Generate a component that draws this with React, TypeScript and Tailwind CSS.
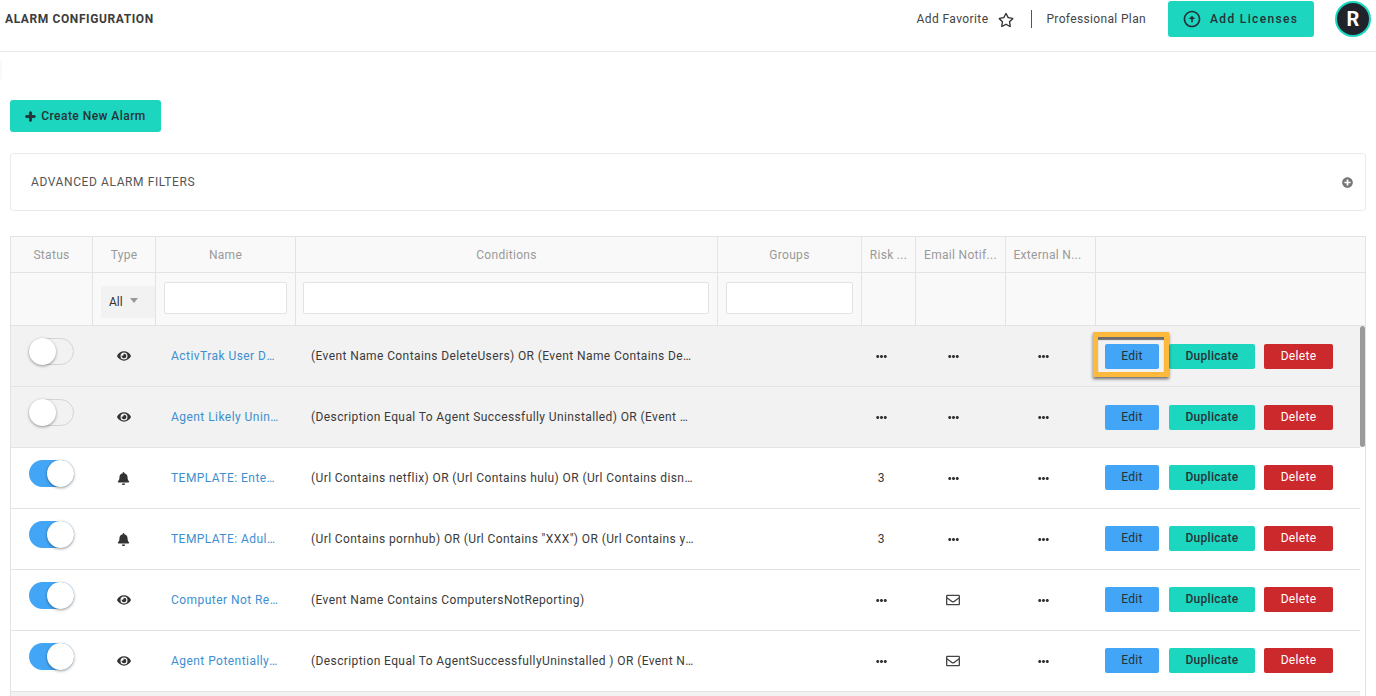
import { FaBell, FaEllipsisH, FaEye, FaPlus, FaPlusCircle, FaRegEnvelope, FaRegStar } from "react-icons/fa"
import { MdOutlineArrowCircleUp } from "react-icons/md"

const cols = "grid grid-cols-[82px_63px_140px_422px_144px_54px_90px_90px_264px]"

const headers = ["Status", "Type", "Name", "Conditions", "Groups", "Risk ...", "Email Notif...", "External N...", ""]

type Alarm = {
  on: boolean
  kind: "eye" | "bell"
  name: string
  conditions: string
  risk?: string
  email?: boolean
}

const alarms: Alarm[] = [
  { on: false, kind: "eye", name: "ActivTrak User Delete Alarm", conditions: "(Event Name Contains DeleteUsers) OR (Event Name Contains DeleteUserAccounts) OR (Event Name Contains Other)" },
  { on: false, kind: "eye", name: "Agent Likely Uninstalled", conditions: "(Description Equal To Agent Successfully Uninstalled) OR (Event Name Contains AgentUninstalled) OR (Other)" },
  { on: true, kind: "bell", name: "TEMPLATE: Entertainment", conditions: "(Url Contains netflix) OR (Url Contains hulu) OR (Url Contains disneyplus) OR (Url Contains youtube)", risk: "3" },
  { on: true, kind: "bell", name: "TEMPLATE: Adult Content", conditions: "(Url Contains pornhub) OR (Url Contains \"XXX\") OR (Url Contains youporn) OR (Url Contains other sites)", risk: "3" },
  { on: true, kind: "eye", name: "Computer Not Reporting", conditions: "(Event Name Contains ComputersNotReporting)", email: true },
  { on: true, kind: "eye", name: "Agent Potentially Uninstalled", conditions: "(Description Equal To AgentSuccessfullyUninstalled ) OR (Event Name Contains AgentUninstalled) OR (Other)", email: true },
]

function Toggle({ on }: { on: boolean }) {
  return (
    <div
      className={
        on
          ? "flex h-[27px] w-[45px] justify-end rounded-full bg-[#42a5f5]"
          : "flex h-[27px] w-[45px] justify-start rounded-full border border-[#d4d4d4] bg-[#f2f2f2]"
      }
    >
      <div className={`h-[27px] w-[27px] shrink-0 rounded-full bg-white shadow-[0_1px_3px_rgba(0,0,0,0.4)] ${on ? "" : "-ml-px -mt-px"}`} />
    </div>
  )
}

function Dots() {
  return <FaEllipsisH className="text-[11px] text-[#333]" />
}

function AlarmRow({ alarm, index }: { alarm: Alarm; index: number }) {
  return (
    <div className={`${cols} h-[61px] w-[1349px] items-center border-b border-[#e3e3e3] text-xs text-[#3a3a3a] ${alarm.on ? "bg-white" : "bg-[#f2f2f2]"}`}>
      <div className="flex h-full justify-start pl-[18px] pt-3">
        <Toggle on={alarm.on} />
      </div>
      <div className="flex justify-center pr-[2px]">
        {alarm.kind === "eye" ? <FaEye className="text-[14px] text-[#333]" /> : <FaBell className="text-[13px] text-[#333]" />}
      </div>
      <div className="truncate pl-[15px] pr-[17px] tracking-[0.45px] text-[#3d8fcf]">{alarm.name}</div>
      <div className="truncate pl-[15px] pr-[24px] tracking-[0.4px]">{alarm.conditions}</div>
      <div />
      <div className="flex justify-center pr-4">{alarm.risk ?? <Dots />}</div>
      <div className="flex justify-center pr-4">
        {alarm.email ? <FaRegEnvelope className="text-[14px] text-[#444]" /> : <Dots />}
      </div>
      <div className="flex justify-center pr-4"><Dots /></div>
      <div className={`relative flex items-center pl-[9px] tracking-[0.3px] ${index >= 2 ? "-mt-[2px]" : ""}`}>
        <button className="h-[25px] w-[54px] rounded-[2px] bg-[#42a5f5] text-[#263238]">Edit</button>
        <button className="ml-[10px] h-[25px] w-[86px] rounded-[2px] bg-[#1cd6c0] font-medium text-[#263238]">Duplicate</button>
        <button className="ml-[9px] h-[25px] w-[69px] rounded-[2px] bg-[#cc292c] text-white">Delete</button>
        {index === 0 && (
          <div className="absolute left-[-3px] top-[-12px] h-[45px] w-[76px] border-[5px] border-[#fdb93b] shadow-[0_2px_3px_rgba(0,0,0,0.55),inset_0_3px_1px_rgba(0,0,0,0.55)]" />
        )}
      </div>
    </div>
  )
}

export default function App() {
  return (
    <div className="relative h-[696px] w-[1376px] overflow-hidden bg-white font-['Roboto',sans-serif] text-[#333]">
      <div className="absolute left-0 top-[60px] h-5 w-[2px] rounded-r-full bg-[#f9f9f9]" />
      <header className="flex h-[52px] items-start border-b border-[#e8e8e8] pt-px">
        <h1 className="ml-[5px] mt-[10px] text-xs font-bold tracking-[0.6px] text-[#3c3c3c]">ALARM CONFIGURATION</h1>
        <div className="ml-auto mt-[9px] flex items-center text-xs tracking-[0.4px] text-[#444]">
          Add Favorite
          <FaRegStar className="ml-[10px] mt-[2px] text-[16px] text-[#333]" />
        </div>
        <div className="ml-[17px] mt-[9px] h-[18px] w-px bg-[#555]" />
        <div className="ml-[14px] mt-[10px] text-xs tracking-[0.35px] text-[#444]">Professional Plan</div>
        <button className="ml-[22px] flex h-[36px] w-[146px] items-center justify-start gap-2 rounded-[3px] bg-[#1cd6c0] pl-[14px] text-xs font-medium tracking-[1.35px] text-[#263238]">
          <MdOutlineArrowCircleUp className="text-[20px]" />
          Add Licenses
        </button>
        <div className="ml-[21px] mr-[5px] flex h-9 w-9 items-center justify-center rounded-full border-2 border-[#1cd6c0] bg-[#20232b] text-[20px] font-bold text-white">
          R
        </div>
      </header>

      <div className="px-[10px] pt-12">
        <button className="flex h-8 w-[151px] items-center justify-center gap-[5px] rounded-[3px] bg-[#1cd6c0] text-xs font-medium tracking-[0.45px] text-[#263238]">
          <FaPlus className="text-[11px]" stroke="currentColor" strokeWidth={40} />
          Create New Alarm
        </button>

        <div className="mt-[21px] flex h-[58px] w-[1356px] items-center justify-between rounded-[3px] border border-[#ebebeb] pl-5 pr-3 text-xs tracking-[0.6px] text-[#555]">
          ADVANCED ALARM FILTERS
          <FaPlusCircle className="text-[11px] text-[#777]" />
        </div>

        <div className="relative mt-[25px] w-[1356px] border-x border-t border-[#e3e3e3]">
          <div className={`${cols} h-9 border-b border-[#e3e3e3] bg-[#f9f9f9] text-xs tracking-[0.3px] text-[#999]`}>
            {headers.map((h, i) => (
              <div key={i} className={`flex items-center justify-center truncate ${i < 8 ? "border-r border-[#e3e3e3]" : ""} ${i === 7 ? "pr-[6px]" : ""}`}>
                {h}
              </div>
            ))}
          </div>
          <div className={`${cols} h-[53px] border-b border-[#e3e3e3] bg-[#f9f9f9]`}>
            <div className="border-r border-[#e3e3e3]" />
            <div className="flex items-center justify-end border-r border-[#e3e3e3] pt-[5px]">
              <div className="flex h-8 w-[54px] items-center gap-[7px] bg-[#f2f2f2] pl-2 text-xs text-[#333]">
                All
                <div className="mb-[2px] h-0 w-0 border-x-4 border-t-[5px] border-x-transparent border-t-[#999]" />
              </div>
            </div>
            {[0, 1, 2].map((i) => (
              <div key={i} className={`flex items-center justify-center border-r border-[#e3e3e3] pb-[2px] ${i === 1 ? "pr-px" : ""}`}>
                <input className={`h-8 rounded-[2px] border border-[#e3e3e3] bg-white ${i === 0 ? "w-[123px]" : i === 1 ? "w-[406px]" : "w-[127px]"}`} />
              </div>
            ))}
            <div className="border-r border-[#e3e3e3]" />
            <div className="border-r border-[#e3e3e3]" />
            <div className="border-r border-[#e3e3e3]" />
            <div />
          </div>
          {alarms.map((a, i) => (
            <AlarmRow key={a.name} alarm={a} index={i} />
          ))}
          <div className="h-10 w-[1349px] bg-[#f2f2f2]" />
          <div className="absolute right-0 top-[89px] h-[121px] w-[5px] rounded-full bg-[#9a9a9a]" />
        </div>
      </div>
    </div>
  )
}
